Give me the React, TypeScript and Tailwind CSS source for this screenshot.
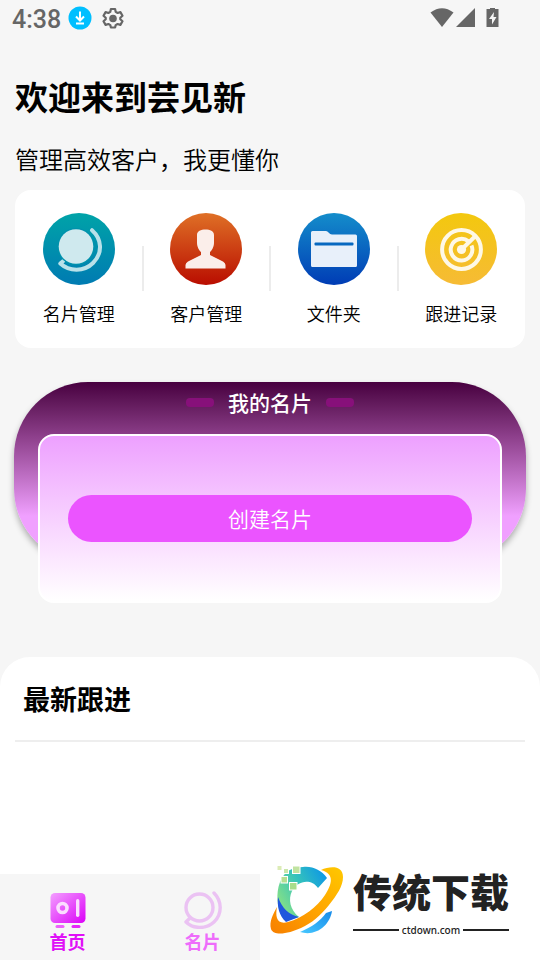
import type { ReactNode } from 'react';

interface MenuItem {
    label: string;
    icon: ReactNode;
}

const menu: MenuItem[] = [
    { label: '名片管理', icon: <CardIcon /> },
    { label: '客户管理', icon: <CustomerIcon /> },
    { label: '文件夹', icon: <FolderIcon /> },
    { label: '跟进记录', icon: <RecordIcon /> },
];

function CardIcon() {
    return (
        <svg viewBox="0 0 72 72" className="size-[72px]">
            <defs>
                <linearGradient id="teal" x1="0.5" y1="0" x2="0.5" y2="1">
                    <stop offset="0" stopColor="#00a3a8" />
                    <stop offset="1" stopColor="#007bb2" />
                </linearGradient>
            </defs>
            <circle cx="36" cy="36" r="36" fill="url(#teal)" />
            <path
                d="M49 17.200C59 26 60 40 50 50C41 59 26 58.500 17.300 50.500L20 48.200"
                fill="none"
                stroke="#b9e1e9"
                strokeWidth="4"
                strokeLinecap="round"
                strokeLinejoin="round"
            />
            <circle cx="33" cy="33.500" r="18.600" fill="#0092ac" />
            <circle cx="33" cy="33.500" r="17.300" fill="#cfe9ee" />
        </svg>
    );
}

function CustomerIcon() {
    return (
        <svg viewBox="0 0 72 72" className="size-[72px]">
            <defs>
                <linearGradient id="orange" x1="0.5" y1="0" x2="0.5" y2="1">
                    <stop offset="0" stopColor="#df7026" />
                    <stop offset="1" stopColor="#b90d00" />
                </linearGradient>
            </defs>
            <circle cx="36" cy="36" r="36" fill="url(#orange)" />
            <path
                d="M27 22C27 18 31 16.500 35.500 16.500S44 18 44 22V30C44 34 41.500 38 40 39V42L53 48.500Q55.500 50 55.500 52V55.500H15.500V52Q15.500 50 18 48.500L31 42V39C29.500 38 27 34 27 30Z"
                fill="#fbeeea"
            />
        </svg>
    );
}

function FolderIcon() {
    return (
        <svg viewBox="0 0 72 72" className="size-[72px]">
            <defs>
                <linearGradient id="blue" x1="0.5" y1="0" x2="0.5" y2="1">
                    <stop offset="0" stopColor="#148dcb" />
                    <stop offset="1" stopColor="#003cb5" />
                </linearGradient>
            </defs>
            <circle cx="36" cy="36" r="36" fill="url(#blue)" />
            <path
                d="M14.500 18H28Q29.500 18 30.500 19.500Q32 21.500 34 21.500H57.500Q59 21.500 59 23V52.500Q59 54 57.500 54H14.500Q13 54 13 52.500V19.500Q13 18 14.500 18Z"
                fill="#e8f0fa"
            />
            <rect x="16.500" y="29.500" width="39" height="3" rx="1" fill="#0768c0" />
        </svg>
    );
}

function RecordIcon() {
    return (
        <svg viewBox="0 0 72 72" className="size-[72px]">
            <defs>
                <linearGradient id="yellow" x1="0.5" y1="0" x2="0.5" y2="1">
                    <stop offset="0" stopColor="#f3c80e" />
                    <stop offset="1" stopColor="#f6bb35" />
                </linearGradient>
            </defs>
            <circle cx="36" cy="36" r="36" fill="url(#yellow)" />
            <g fill="none" stroke="#fef8e6" strokeWidth="4">
                <circle cx="36.500" cy="36.500" r="19.400" />
                <path d="M43.500 28.400A10.800 10.800 0 1 0 46.500 32.500" />
                <path d="M37 36L51 22.500" />
            </g>
            <circle cx="36.500" cy="36.500" r="4.600" fill="#fef8e6" />
        </svg>
    );
}

function HomeIcon() {
    return (
        <svg viewBox="0 0 36 36" className="size-9">
            <defs>
                <linearGradient id="home" x1="0" y1="0" x2="1" y2="1">
                    <stop offset="0" stopColor="#f3a0ff" />
                    <stop offset="1" stopColor="#dc00f8" />
                </linearGradient>
            </defs>
            <rect x="0.500" y="0" width="35" height="30" rx="4.500" fill="url(#home)" />
            <circle cx="12.500" cy="15" r="4.500" fill="none" stroke="#fbdcff" strokeWidth="3.600" />
            <rect x="26" y="6" width="3.400" height="18" rx="1.700" fill="#fbdcff" />
            <rect x="5.500" y="32" width="9" height="3" rx="1.500" fill="#ec64fb" />
            <rect x="21.500" y="32" width="9" height="3" rx="1.500" fill="#e528fa" />
        </svg>
    );
}

function CardTabIcon() {
    return (
        <svg viewBox="0 0 38 38" className="size-[38px]">
            <g fill="none" stroke="#ebc2f3" strokeWidth="3.400" strokeLinecap="round" strokeLinejoin="round">
                <circle cx="15.500" cy="16.500" r="13.500" />
                <path d="M30 2C38 10 38.500 23 30 31C22 38.500 9 38 2 31L5.500 27.500" />
            </g>
        </svg>
    );
}

function StatusBar() {
    return (
        <div className="flex h-9 items-center pr-[30px] pl-3 text-[#666]">
            <span className="pt-1 font-[Roboto] text-[25px] leading-8 font-medium">4:38</span>
            <svg viewBox="0 0 24 24" className="ml-[7px] size-6">
                <circle cx="12" cy="12" r="11.500" fill="#00bfff" />
                <path d="M12 5.500V14M8 10.500L12 14.500L16 10.500M8 17.500H16" fill="none" stroke="#fff" strokeWidth="2" />
            </svg>
            <svg viewBox="0 0 24 24" className="ml-[9px] size-6">
                <path
                    d="M9.900 3h4.200l.6 2.900 1.900 1.100 2.800-.9 2.100 3.600-2.200 2v1.600l2.200 2-2.100 3.600-2.800-.9-1.900 1.100-.6 2.400H9.900l-.6-2.400-1.900-1.100-2.800.9-2.100-3.600 2.200-2v-1.600l-2.200-2 2.100-3.600 2.800.9 1.900-1.100Z"
                    fill="none"
                    stroke="#666"
                    strokeWidth="2.200"
                    strokeLinejoin="round"
                />
                <circle cx="12" cy="12.500" r="3.800" fill="#666" />
            </svg>
            <div className="ml-auto flex items-center gap-[2px]">
                <svg viewBox="0 0 24 20" className="h-5 w-6">
                    <path d="M12 19L0.500 4.500Q12-4 23.500 4.500Z" fill="#666" />
                </svg>
                <svg viewBox="0 0 20 20" className="size-5">
                    <path d="M19 0V19H0Z" fill="#666" />
                </svg>
                <svg viewBox="0 0 24 20" className="ml-2 h-5 w-6">
                    <path d="M4 -1H9V1H12.500V19H0.500V1H4Z" fill="#666" />
                    <path d="M8 4L3 11H6V16.500L10.500 9H7.500Z" fill="#f6f6f6" />
                </svg>
            </div>
        </div>
    );
}

function SiteBadge() {
    return (
        <div className="absolute right-0 bottom-0 flex h-[100px] w-[280px] bg-white pl-2">
            <svg viewBox="0 0 80 76" className="mt-1 h-[76px] w-20">
                <defs>
                    <linearGradient id="ring" x1="0" y1="1" x2="1" y2="0">
                        <stop offset="0" stopColor="#f77f00" />
                        <stop offset="0.5" stopColor="#ffa500" />
                        <stop offset="1" stopColor="#ffc800" />
                    </linearGradient>
                    <linearGradient id="arc" x1="0" y1="0.7" x2="1" y2="0.1">
                        <stop offset="0" stopColor="#8ae283" />
                        <stop offset="0.5" stopColor="#35c3bb" />
                        <stop offset="1" stopColor="#0b95e8" />
                    </linearGradient>
                    <linearGradient id="tail" x1="0" y1="1" x2="1" y2="0">
                        <stop offset="0" stopColor="#48c8ff" />
                        <stop offset="1" stopColor="#168bea" />
                    </linearGradient>
                </defs>
                <path
                    d="M59 14C53 6 45 2 35 3C26 3 20 6 16 11C9 20 8 34 11 45L18 57L31 53C22 46 20 35 24 27C29 17 43 14 50 24Z"
                    fill="url(#arc)"
                />
                <path d="M10 33C14 44 21 51 31 53L18 58C11 52 9 42 10 33Z" fill="#2057dd" />
                <path
                    d="M53 6C62 2 75 1 75 13C75 22 69 31 61 41C52 52 44 59 33 64C22 69 6 73 3 65C1 58 5 50 9 43C7 53 9 61 20 58C35 54 49 43 57 31C64 20 67 10 53 6Z"
                    fill="url(#ring)"
                />
                <path d="M32 68C44 63 52 57 58 49L64 47C62 61 48 73 32 68Z" fill="url(#tail)" />
                <g stroke="#fff" strokeWidth="1">
                    <rect x="24.500" y="2" width="7.500" height="7.500" fill="#c1e3a0" />
                    <rect x="21.500" y="18.500" width="7.500" height="7.500" fill="#a8dd8b" />
                    <rect x="13" y="12.500" width="6.500" height="6.500" fill="#b5df91" />
                    <rect x="15.500" y="4.500" width="5" height="5" fill="#c9e7aa" />
                    <rect x="9" y="1.500" width="5" height="5" fill="#dcecb6" />
                </g>
            </svg>
            <div className="ml-[5px] w-[156px] pt-1 text-[#222]">
                <div className="text-[39px] leading-[52px] font-black whitespace-nowrap">传统下载</div>
                <div className="flex items-center gap-[3px] font-['Noto_Sans'] text-[10px] leading-7 font-medium">
                    <span className="h-[2px] flex-1 bg-[#222]" />
                    ctdown.com
                    <span className="h-[2px] flex-1 bg-[#222]" />
                </div>
            </div>
        </div>
    );
}

export default function App() {
    return (
        <div className="relative flex min-h-screen flex-col bg-[#f6f6f6] font-['Noto_Sans_CJK_SC',sans-serif] text-black">
            <StatusBar />

            <header className="px-[15px] pt-[35px]">
                <h1 className="text-[33px] leading-[50px] font-bold">欢迎来到芸见新</h1>
                <p className="mt-5 text-2xl leading-9 font-[350]">管理高效客户，我更懂你</p>
            </header>

            {/* Quick menu */}
            <nav className="mx-[15px] mt-[13px] flex h-[158px] rounded-2xl bg-white">
                {menu.map((item, i) => (
                    <div key={item.label} className="flex flex-1 items-start">
                        <button type="button" className="flex flex-1 flex-col items-center gap-4 pt-[23px]">
                            {item.icon}
                            <span className="text-lg leading-6 font-[350]">{item.label}</span>
                        </button>
                        {i < menu.length - 1 && <span className="-mx-px mt-14 h-[45px] w-[2px] bg-[#ececec]" />}
                    </div>
                ))}
            </nav>

            {/* My card */}
            <section className="mx-[14px] mt-[34px] h-[181px] rounded-[74px] bg-linear-to-b from-[#480040] via-[#8d3f8b] via-30% to-[#f0a0ff] to-74% px-6 shadow-[0_4px_6px_rgba(0,0,0,0.3)]">
                <div className="flex h-[52px] items-start justify-center gap-[14px] pt-1">
                    <span className="mt-3 h-[9px] w-7 rounded-[4px] bg-[#87107a]" />
                    <h2 className="text-[21px] leading-8 font-medium text-white">我的名片</h2>
                    <span className="mt-3 h-[9px] w-7 rounded-[4px] bg-[#87107a]" />
                </div>
                <div className="flex h-[169px] items-center rounded-2xl border-2 border-white bg-linear-to-b from-[#eda0ff] to-white px-7">
                    <button
                        type="button"
                        className="h-[47px] w-full rounded-full bg-[#eb54ff] text-[21px] font-[350] text-white"
                    >
                        创建名片
                    </button>
                </div>
            </section>

            {/* Latest follow-ups */}
            <section className="mt-[94px] flex-1 rounded-t-[30px] bg-white px-[15px]">
                <h2 className="border-b-2 border-[#eee] px-2 pt-[22px] pb-[21px] text-[27px] leading-10 font-bold">
                    最新跟进
                </h2>
            </section>

            <footer className="grid h-[86px] grid-cols-4 text-lg leading-6 font-bold">
                <button type="button" className="flex flex-col items-center pt-[19px] text-[#e010f8]">
                    <HomeIcon />
                    首页
                </button>
                <button type="button" className="flex flex-col items-center pt-[17px] text-[#ee6cfb]">
                    <CardTabIcon />
                    名片
                </button>
            </footer>

            <SiteBadge />
        </div>
    );
}
